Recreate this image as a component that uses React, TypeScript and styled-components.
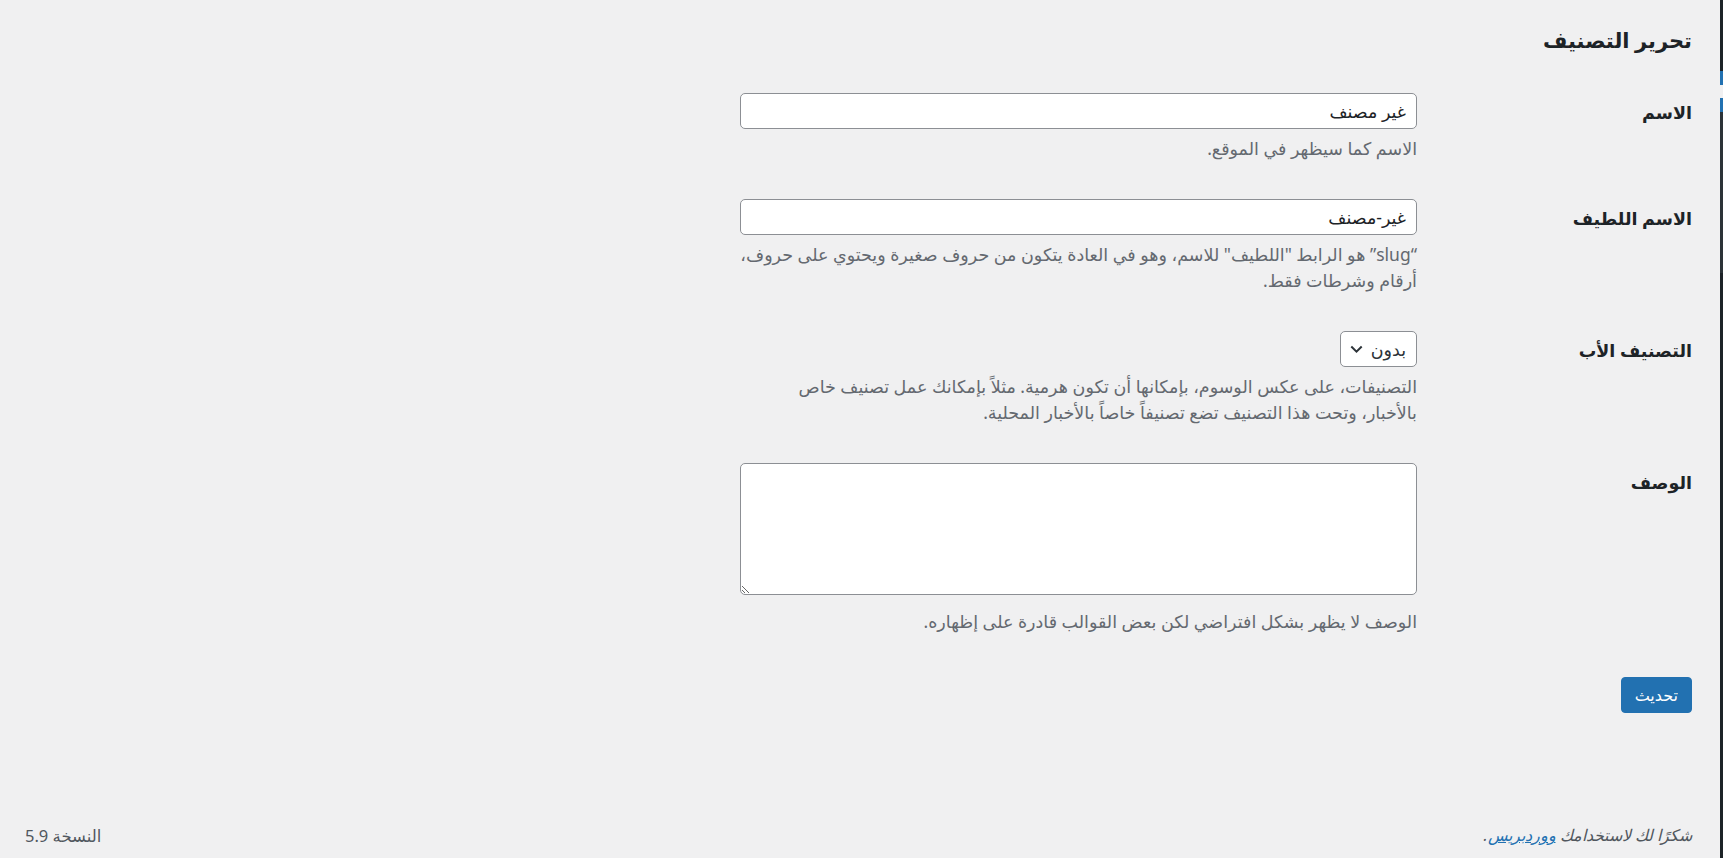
import React from 'react';
import styled, { createGlobalStyle } from 'styled-components';

const colors = {
  background: '#f0f0f1',
  text: '#1d2327',
  description: '#646970',
  footer: '#50575e',
  border: '#8c8f94',
  primary: '#2271b1',
  menu: '#1d2327',
  submenu: '#2c3338',
};

const fontStack = `"Noto Sans", "DejaVu Sans", sans-serif`;

const GlobalStyle = createGlobalStyle`
  html, body {
    margin: 0;
    padding: 0;
    height: 100%;
    background: ${colors.background};
    overflow: hidden;
  }

  body {
    font-family: ${fontStack};
    color: ${colors.text};
  }

  * {
    box-sizing: border-box;
  }
`;

const menuSegments = [
  { height: 71, color: colors.menu },
  { height: 14, color: colors.primary },
  { height: 13, color: colors.background },
  { height: 14, color: colors.primary },
  { height: 161, color: colors.submenu },
];

export default function App() {
  return (
    <>
      <GlobalStyle />
      <Page dir="rtl">
        <AdminMenu>
          {menuSegments.map((segment, index) => (
            <MenuSegment key={index} height={segment.height} color={segment.color} />
          ))}
          <MenuRest />
        </AdminMenu>
        <Content>
          <Wrap>
            <Title>تحرير التصنيف</Title>
            <FormTable>
              <FieldRow>
                <LabelCell>
                  <Label htmlFor="name">الاسم</Label>
                </LabelCell>
                <FieldCell>
                  <TextInput id="name" defaultValue="غير مصنف" />
                  <Description>الاسم كما سيظهر في الموقع.</Description>
                </FieldCell>
              </FieldRow>
              <FieldRow>
                <LabelCell>
                  <Label htmlFor="slug">الاسم اللطيف</Label>
                </LabelCell>
                <FieldCell>
                  <TextInput id="slug" defaultValue="غير-مصنف" />
                  <Description>
                    “slug” هو الرابط "اللطيف" للاسم، وهو في العادة يتكون من حروف صغيرة ويحتوي على حروف،
                    <br />
                    أرقام وشرطات فقط.
                  </Description>
                </FieldCell>
              </FieldRow>
              <FieldRow>
                <LabelCell>
                  <Label>التصنيف الأب</Label>
                </LabelCell>
                <FieldCell>
                  <SelectBox>
                    <span>بدون</span>
                    <svg width="13" height="9" viewBox="0 0 13 9" fill="none">
                      <path d="M1.3 1.5L6.5 6.6L11.7 1.5" stroke="#2c3338" strokeWidth="2" />
                    </svg>
                  </SelectBox>
                  <Description>
                    التصنيفات، على عكس الوسوم، بإمكانها أن تكون هرمية. مثلاً بإمكانك عمل تصنيف خاص
                    <br />
                    بالأخبار، وتحت هذا التصنيف تضع تصنيفاً خاصاً بالأخبار المحلية.
                  </Description>
                </FieldCell>
              </FieldRow>
              <FieldRow>
                <LabelCell>
                  <Label htmlFor="description">الوصف</Label>
                </LabelCell>
                <FieldCell>
                  <TextArea id="description" rows={5} />
                  <Description>الوصف لا يظهر بشكل افتراضي لكن بعض القوالب قادرة على إظهاره.</Description>
                </FieldCell>
              </FieldRow>
            </FormTable>
            <SubmitRow>
              <PrimaryButton type="button">تحديث</PrimaryButton>
            </SubmitRow>
          </Wrap>
          <Footer>
            <ThankYou>
              شكرًا لك لاستخدامك <FooterLink href="#">ووردبريس</FooterLink>.
            </ThankYou>
            <Version>النسخة 5.9</Version>
          </Footer>
        </Content>
      </Page>
    </>
  );
}

const Page = styled.div`
  display: flex;
  flex-direction: row;
  height: 858px;
`;

const AdminMenu = styled.nav`
  display: flex;
  flex-direction: column;
  width: 3px;
  flex-shrink: 0;
`;

const MenuSegment = styled.div<{ height: number; color: string }>`
  height: ${({ height }) => height}px;
  background: ${({ color }) => color};
`;

const MenuRest = styled.div`
  flex: 1;
  background: ${colors.menu};
`;

const Content = styled.main`
  display: flex;
  flex-direction: column;
  flex: 1;
  padding-right: 28px;
`;

const Wrap = styled.div`
  display: flex;
  flex-direction: column;
  margin-top: 12px;
`;

const Title = styled.h1`
  margin: 0;
  padding: 14px 0 12px;

  font-size: 21px;
  font-weight: 700;
  line-height: 28px;
  color: ${colors.text};
`;

const FormTable = styled.div`
  display: flex;
  flex-direction: column;
  width: 1000px;
  margin-top: 8px;
`;

const FieldRow = styled.div`
  display: grid;
  grid-template-columns: 263px 1fr;
`;

const LabelCell = styled.div`
  padding: 26px 0 19px 13px;
`;

const Label = styled.label`
  display: block;
  font-size: 17.5px;
  font-weight: 700;
  line-height: 24px;
  color: ${colors.text};
`;

const FieldCell = styled.div`
  display: flex;
  flex-direction: column;
  align-items: flex-start;
  padding: 19px 12px;
`;

const TextInput = styled.input`
  width: 95%;
  height: 36px;
  padding: 0 10px;

  font-family: ${fontStack};
  font-size: 17.5px;
  color: ${colors.text};

  background: #fff;
  border: 1px solid ${colors.border};
  border-radius: 5px;
  outline: none;
`;

const SelectBox = styled.div`
  display: flex;
  align-items: center;
  gap: 8px;
  height: 36px;
  padding: 0 10px 0 9px;

  font-size: 17.5px;
  color: #2c3338;

  background: #fff;
  border: 1px solid ${colors.border};
  border-radius: 5px;
`;

const TextArea = styled.textarea`
  display: block;
  width: 95%;
  height: 132px;
  margin-bottom: 7px;
  padding: 3px 8px;

  font-family: ${fontStack};
  font-size: 17.5px;
  color: ${colors.text};

  background: #fff;
  border: 1px solid ${colors.border};
  border-radius: 5px;
  outline: none;
`;

const Description = styled.p`
  margin: 6px 0 0;

  font-size: 17.5px;
  line-height: 26px;
  color: ${colors.description};
`;

const SubmitRow = styled.div`
  display: flex;
  padding-top: 24px;
`;

const PrimaryButton = styled.button`
  height: 36px;
  padding: 0 13px;

  font-family: ${fontStack};
  font-size: 16px;
  color: #fff;

  background: ${colors.primary};
  border: 1px solid ${colors.primary};
  border-radius: 4px;
  cursor: pointer;
`;

const Footer = styled.footer`
  display: flex;
  justify-content: space-between;
  align-items: center;
  margin-top: auto;
  padding: 0 0 10px 25px;

  font-size: 16px;
  line-height: 25px;
  color: ${colors.footer};
`;

const ThankYou = styled.span`
  font-style: italic;
`;

const FooterLink = styled.a`
  color: ${colors.primary};
  text-decoration: underline;
`;

const Version = styled.span`
  font-size: 16.5px;
`;
